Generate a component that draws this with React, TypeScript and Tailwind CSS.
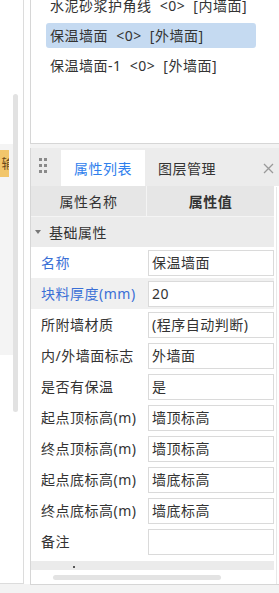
import React from "react";

const font = { fontFamily: '"Noto Sans", "Noto Sans CJK SC", sans-serif' };

const rows: { name: string; value: string; blue?: boolean; hl?: boolean }[] = [
  { name: "名称", value: "保温墙面", blue: true },
  { name: "块料厚度(mm)", value: "20", blue: true, hl: true },
  { name: "所附墙材质", value: "(程序自动判断)" },
  { name: "内/外墙面标志", value: "外墙面" },
  { name: "是否有保温", value: "是" },
  { name: "起点顶标高(m)", value: "墙顶标高" },
  { name: "终点顶标高(m)", value: "墙顶标高" },
  { name: "起点底标高(m)", value: "墙底标高" },
  { name: "终点底标高(m)", value: "墙底标高" },
  { name: "备注", value: "" },
];

function Grip() {
  return (
    <svg width="8" height="18" viewBox="0 0 8 18" className="block">
      {[0, 1, 2].map((r) =>
        [0, 1].map((c) => (
          <rect key={`${r}-${c}`} x={c * 5} y={r * 6} width="3" height="3" fill="#8a8a8a" />
        ))
      )}
    </svg>
  );
}

export default function App() {
  return (
    <div
      className="w-[279px] h-[593px] bg-[#f3f3f3] flex overflow-hidden text-[#333] tracking-[0.5px]"
      style={font}
    >
      {/* left strip */}
      <div className="w-[24px] h-[584px] bg-white border-r border-b border-[#dcdcdc] flex shrink-0">
        <div className="w-[13px] flex flex-col">
          <div className="h-[144px]" />
          <div className="h-[211px] bg-[#f4f4f4] pt-[6px]">
            <div className="w-[9px] h-[27px] bg-[#f2c66b] overflow-hidden flex items-center justify-end text-[13px] leading-none text-[#6b4a1a]">
              <span className="-mr-[6px]">输</span>
            </div>
          </div>
        </div>
        <div className="w-[10px] flex flex-col">
          <div className="h-[94px]" />
          <div className="w-[5px] h-[318px] rounded-full bg-[#e2e2e2]" />
        </div>
      </div>
      <div className="w-[6px] h-[584px] bg-white shrink-0" />
      {/* right area */}
      <div className="flex-1 flex flex-col">
        {/* list panel */}
        <div className="h-[144px] bg-white border-l border-b border-[#d6d6d6] overflow-hidden">
          <div className="-mt-[7px] pl-[15px] flex flex-col gap-[5px] text-[14px] leading-[25px] [word-spacing:4px]">
            <div className="h-[25px] w-[210px] pl-[4px] whitespace-nowrap">水泥砂浆护角线 &lt;0&gt; [内墙面]</div>
            <div className="h-[25px] w-[210px] pl-[4px] whitespace-nowrap bg-[#c5daf1] rounded-[3px]">保温墙面 &lt;0&gt; [外墙面]</div>
            <div className="h-[25px] w-[210px] pl-[4px] whitespace-nowrap">保温墙面-1 &lt;0&gt; [外墙面]</div>
          </div>
        </div>
        <div className="h-[4px]" />
        {/* property panel */}
        <div className="h-[437px] bg-white border-l border-b border-[#d6d6d6] flex flex-col">
          {/* tabs */}
          <div className="h-[38px] bg-[#ececec] flex items-end relative">
            <div className="w-[30px] h-full flex items-center pl-[8px]">
              <Grip />
            </div>
            <div className="w-[84px] h-[36px] bg-white flex items-center justify-center text-[14px] text-[#2f80ed]">
              属性列表
            </div>
            <div className="w-[84px] h-[36px] flex items-center justify-center text-[14px] text-[#333]">
              图层管理
            </div>
            <div className="flex-1" />
            <div className="w-[16px] h-[36px] flex items-center justify-start text-[#9a9a9a]">
              <svg width="11" height="11" viewBox="0 0 11 11">
                <path d="M1 1 L10 10 M10 1 L1 10" stroke="#9a9a9a" strokeWidth="1.3" />
              </svg>
            </div>
          </div>
          {/* table */}
          <div className="flex flex-1">
            <div className="w-[243px] flex flex-col">
              <div className="h-[31px] bg-[#e6e6e6] flex text-[14px] border-b border-[#f4f4f4]">
                <div className="w-[116px] border-r border-[#f4f4f4] flex items-center justify-center">属性名称</div>
                <div className="flex-1 flex items-center justify-center font-bold">属性值</div>
              </div>
              <div className="h-[30px] bg-[#ebebeb] flex items-center text-[14px]">
                <svg width="6" height="4" viewBox="0 0 6 4" className="ml-[4px] mr-[8px]">
                  <path d="M0 0 L6 0 L3 4 Z" fill="#777" />
                </svg>
                基础属性
              </div>
              {rows.map((r) => (
                <div key={r.name} className="h-[31px] flex text-[14px]">
                  <div
                    className={`w-[117px] flex items-center pl-[10px] whitespace-nowrap ${
                      r.hl ? "bg-[#f0f0f0]" : ""
                    } ${r.blue ? "text-[#3a6fd6]" : "text-[#333]"}`}
                  >
                    {r.name}
                  </div>
                  <div className={`flex-1 flex items-center ${r.hl ? "bg-[#f0f0f0]" : ""}`}>
                    <div className="w-full h-[26px] bg-white border border-[#dadada] flex items-center pl-[3px] whitespace-nowrap overflow-hidden">
                      {r.value}
                    </div>
                  </div>
                </div>
              ))}
              <div className="h-[4px]" />
              <div className="h-[9px] bg-[#ebebeb] relative">
                <div className="absolute left-[42px] top-[5px] w-[2px] h-[2px] bg-[#555]" />
              </div>
              <div className="h-[5px]" />
              <div className="ml-[22px] w-[168px] h-[5px] rounded-full bg-[#e3e3e3]" />
            </div>
            <div className="flex-1 flex">
              <div className="w-[2px]" />
              <div className="w-px bg-[#e8e8e8] mt-[1px]" />
            </div>
          </div>
        </div>
      </div>
    </div>
  );
}
